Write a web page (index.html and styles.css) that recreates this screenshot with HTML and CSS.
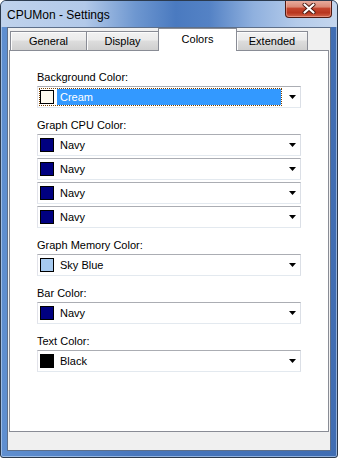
FILE: index.html
```html
<!DOCTYPE html>
<html lang="en">
<head>
    <meta charset="UTF-8">
    <title>CPUMon - Settings</title>
    <link rel="stylesheet" href="styles.css">
</head>
<body>
    <div class="window">
        <!-- Title bar -->
        <div class="titlebar">
            <span class="title">CPUMon - Settings</span>
            <div class="close-btn">
                <svg width="14" height="11" viewBox="0 0 14 11">
                    <path d="M2.5 1.5 L11.5 9.5 M11.5 1.5 L2.5 9.5" stroke="#4a1a12" stroke-width="4" stroke-linecap="round"/>
                    <path d="M2.5 1.5 L11.5 9.5 M11.5 1.5 L2.5 9.5" stroke="#ffffff" stroke-width="2.2" stroke-linecap="round"/>
                </svg>
            </div>
        </div>

        <div class="client">
            <!-- Tabs -->
            <div class="tabs">
                <div class="tab tab-general">General</div>
                <div class="tab tab-display">Display</div>
                <div class="tab tab-colors selected">Colors</div>
                <div class="tab tab-extended">Extended</div>
            </div>

            <div class="panel">
                <div class="field">
                    <div class="label">Background Color:</div>
                    <div class="combo">
                        <div class="value focused">
                            <span class="swatch cream"></span>
                            <span class="text">Cream</span>
                        </div>
                        <div class="arrow"><svg width="7" height="4" viewBox="0 0 7 4"><polygon points="0,0 7,0 3.5,4" fill="#000"/></svg></div>
                    </div>
                </div>

                <div class="field">
                    <div class="label">Graph CPU Color:</div>
                    <div class="combo">
                        <div class="value"><span class="swatch navy"></span><span class="text">Navy</span></div>
                        <div class="arrow"><svg width="7" height="4" viewBox="0 0 7 4"><polygon points="0,0 7,0 3.5,4" fill="#000"/></svg></div>
                    </div>
                    <div class="combo">
                        <div class="value"><span class="swatch navy"></span><span class="text">Navy</span></div>
                        <div class="arrow"><svg width="7" height="4" viewBox="0 0 7 4"><polygon points="0,0 7,0 3.5,4" fill="#000"/></svg></div>
                    </div>
                    <div class="combo">
                        <div class="value"><span class="swatch navy"></span><span class="text">Navy</span></div>
                        <div class="arrow"><svg width="7" height="4" viewBox="0 0 7 4"><polygon points="0,0 7,0 3.5,4" fill="#000"/></svg></div>
                    </div>
                    <div class="combo">
                        <div class="value"><span class="swatch navy"></span><span class="text">Navy</span></div>
                        <div class="arrow"><svg width="7" height="4" viewBox="0 0 7 4"><polygon points="0,0 7,0 3.5,4" fill="#000"/></svg></div>
                    </div>
                </div>

                <div class="field">
                    <div class="label">Graph Memory Color:</div>
                    <div class="combo">
                        <div class="value"><span class="swatch skyblue"></span><span class="text">Sky Blue</span></div>
                        <div class="arrow"><svg width="7" height="4" viewBox="0 0 7 4"><polygon points="0,0 7,0 3.5,4" fill="#000"/></svg></div>
                    </div>
                </div>

                <div class="field">
                    <div class="label">Bar Color:</div>
                    <div class="combo">
                        <div class="value"><span class="swatch navy"></span><span class="text">Navy</span></div>
                        <div class="arrow"><svg width="7" height="4" viewBox="0 0 7 4"><polygon points="0,0 7,0 3.5,4" fill="#000"/></svg></div>
                    </div>
                </div>

                <div class="field">
                    <div class="label">Text Color:</div>
                    <div class="combo">
                        <div class="value"><span class="swatch black"></span><span class="text">Black</span></div>
                        <div class="arrow"><svg width="7" height="4" viewBox="0 0 7 4"><polygon points="0,0 7,0 3.5,4" fill="#000"/></svg></div>
                    </div>
                </div>
            </div>
        </div>
    </div>
</body>
</html>
```

FILE: styles.css
```css
body {
    margin: 0;
    background-color: #ffffff;
    font-family: "Liberation Sans", Arial, sans-serif;
    font-size: 11px;
    color: #000;
}

.window {
    width: 338px;
    height: 458px;
    box-sizing: border-box;
    border: 1px solid #2b3a4e;
    border-radius: 6px 6px 3px 3px;
    background: linear-gradient(90deg, #5f8fd0 0%, #4877bd 40%, #3f6db3 100%);
    box-shadow: inset 0 0 0 1px rgba(200, 220, 245, 0.6);
    display: flex;
    flex-direction: column;
    overflow: hidden;
}

.titlebar {
    height: 26px;
    display: flex;
    align-items: flex-start;
    background: linear-gradient(90deg, #bfd2ec 0%, #b2c9e9 25%, #6e97d0 40%, #4a7ac0 52%, #5482c5 62%, #8fb0de 75%, #b4cbea 88%, #c4d6ee 100%);
}

.title {
    font-size: 12px;
    color: #000;
    margin: 7px 0 0 6px;
    line-height: 14px;
}

.close-btn {
    margin-left: auto;
    margin-right: 5px;
    margin-top: -1px;
    width: 45px;
    height: 17px;
    border: 1px solid #4f1a12;
    border-top: none;
    border-radius: 0 0 4px 4px;
    background: linear-gradient(180deg, #eab0a2 0%, #db8a77 40%, #c4452e 50%, #b8361f 75%, #d2664b 100%);
    box-shadow: inset 0 0 0 1px rgba(255, 200, 190, 0.45);
    display: flex;
    align-items: center;
    justify-content: center;
}

.client {
    margin: 0 6px 6px 6px;
    flex: 1;
    border: 1px solid #5d6f8a;
    background-color: #f0f0f0;
    display: flex;
    flex-direction: column;
}

.tabs {
    height: 22px;
    display: flex;
    align-items: flex-end;
    padding-left: 2px;
}

.tab {
    height: 19px;
    box-sizing: border-box;
    border: 1px solid #898c95;
    border-bottom: none;
    background: linear-gradient(180deg, #f2f2f2 0%, #ebebeb 45%, #dddddd 50%, #cfcfcf 100%);
    box-shadow: inset 1px 1px 0 #fcfcfc;
    text-align: center;
    line-height: 19px;
    margin-left: -1px;
}

.tab-general { width: 77px; margin-left: 0; }
.tab-display { width: 73px; }
.tab-colors { width: 79px; }
.tab-extended { width: 72px; }

.tab.selected {
    height: 23px;
    margin-bottom: -1px;
    background: #ffffff;
    box-shadow: none;
    line-height: 20px;
    position: relative;
    z-index: 1;
}

.panel {
    margin: 0 1px 0 1px;
    height: 382px;
    box-sizing: border-box;
    border: 1px solid #898c95;
    background-color: #ffffff;
    padding: 19px 27px 0 27px;
}

.field {
    margin-bottom: 10px;
}

.label {
    line-height: 14px;
    margin-bottom: 2px;
}

.combo {
    width: 264px;
    height: 22px;
    box-sizing: border-box;
    border: 1px solid;
    border-color: #abadb3 #dbdfe6 #e3e9ef #e2e3ea;
    background-color: #ffffff;
    display: flex;
    align-items: center;
    margin-bottom: 2px;
}

.value {
    width: 243px;
    height: 18px;
    margin-left: 1px;
    box-sizing: border-box;
    border: 1px solid transparent;
    display: flex;
    align-items: center;
}

.value.focused {
    border: 1px dotted #7a4200;
}

.swatch {
    width: 14px;
    height: 14px;
    box-sizing: border-box;
    border: 1px solid #000;
    margin-left: 0;
}

.text {
    flex: 1;
    height: 16px;
    line-height: 16px;
    margin-left: 3px;
    padding-left: 3px;
}

.focused .text {
    background-color: #3399ff;
    color: #ffffff;
}

.arrow {
    flex: 1;
    display: flex;
    justify-content: center;
    padding-left: 3px;
}

.arrow svg {
    display: block;
}

.cream { background-color: #fffbf0; }
.navy { background-color: #000080; }
.skyblue { background-color: #a6caf0; }
.black { background-color: #000000; }
```
